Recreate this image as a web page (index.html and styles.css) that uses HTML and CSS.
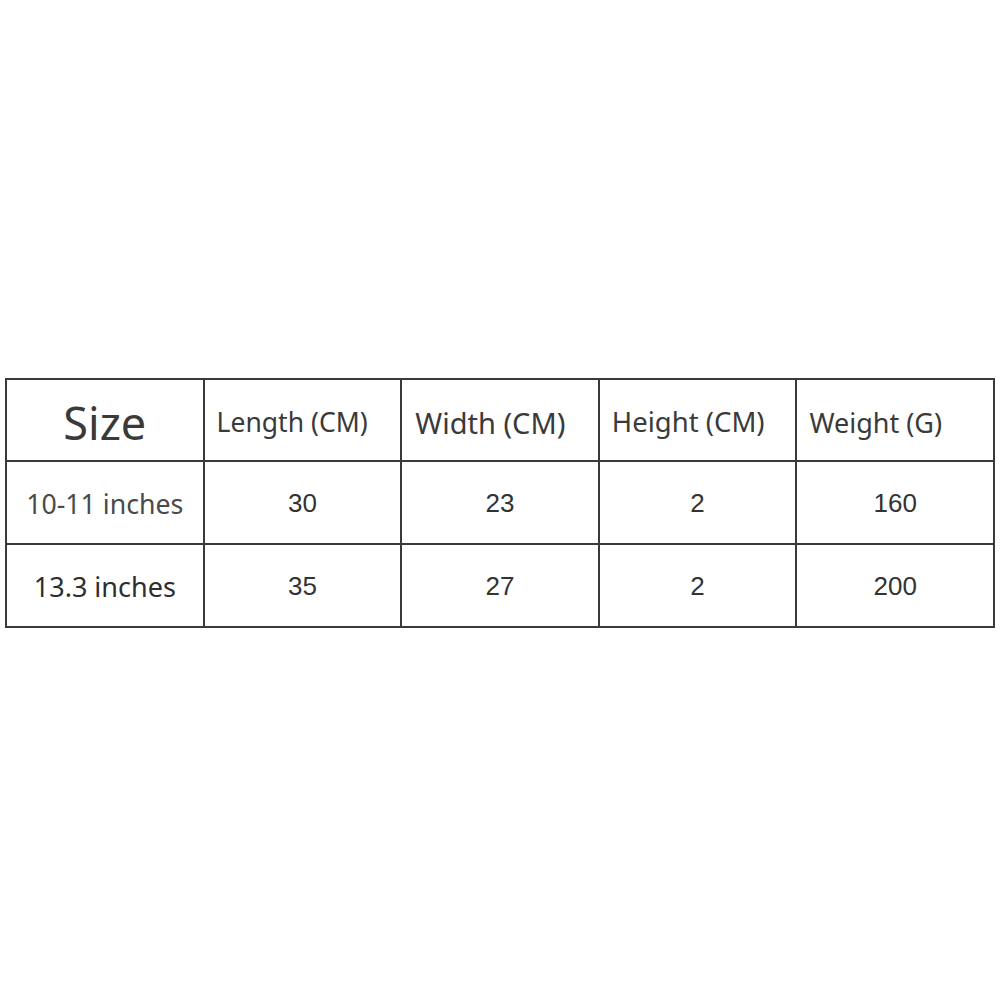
FILE: index.html
```html
<!DOCTYPE html>
<html>
<head>
<meta charset="utf-8">
<link rel="stylesheet" href="styles.css">
</head>
<body>
<div class="page">
  <table class="sizes">
    <colgroup>
      <col class="c"><col class="c"><col class="c"><col class="c"><col class="c">
    </colgroup>
    <tr class="head">
      <th class="size">Size</th>
      <th class="h h-len">Length (CM)</th>
      <th class="h h-wid">Width (CM)</th>
      <th class="h h-hei">Height (CM)</th>
      <th class="h h-wei">Weight (G)</th>
    </tr>
    <tr>
      <td class="label">10-11 inches</td>
      <td class="num">30</td>
      <td class="num">23</td>
      <td class="num">2</td>
      <td class="num">160</td>
    </tr>
    <tr>
      <td class="label dark">13.3 inches</td>
      <td class="num">35</td>
      <td class="num">27</td>
      <td class="num">2</td>
      <td class="num">200</td>
    </tr>
  </table>
</div>
</body>
</html>
```
FILE: styles.css
```css
html, body {
  margin: 0;
  padding: 0;
  background: #ffffff;
}
.page {
  padding: 378px 0 0 5px;
}
.sizes {
  border-collapse: collapse;
  table-layout: fixed;
  width: 988px;
}
.c {
  width: 197.6px;
}
.sizes th, .sizes td {
  border: 2px solid #3a3a3a;
  padding: 0;
}
.head th {
  height: 76px;
  font-weight: normal;
  font-family: "Noto Sans", "Open Sans", sans-serif;
  color: #3a3a3a;
  line-height: 1;
}
.sizes td {
  height: 79px;
}
.size {
  font-size: 45px;
  text-align: center;
  color: #444444;
  padding-top: 4px !important;
}
.h {
  text-align: left;
  padding-left: 12px !important;
  padding-top: 4px !important;
}
.h-len { font-size: 26.5px; }
.h-wid { font-size: 29px; color: #2e2e2e; }
.h-hei { font-size: 27.5px; color: #555555; }
.h-wei { font-size: 27px; color: #3a3a3a; }
.h-wid { padding-left: 13px !important; }
.label {
  font-family: "Noto Sans", "Open Sans", sans-serif;
  font-size: 26.7px;
  color: #4a4a4a;
  text-align: center;
  padding-top: 2px !important;
}
.label.dark {
  font-size: 27px;
  color: #2e2e2e;
}
.num {
  font-family: "Liberation Sans", Arial, sans-serif;
  font-size: 26px;
  color: #333333;
  text-align: center;
  padding-top: 2px !important;
}
```
